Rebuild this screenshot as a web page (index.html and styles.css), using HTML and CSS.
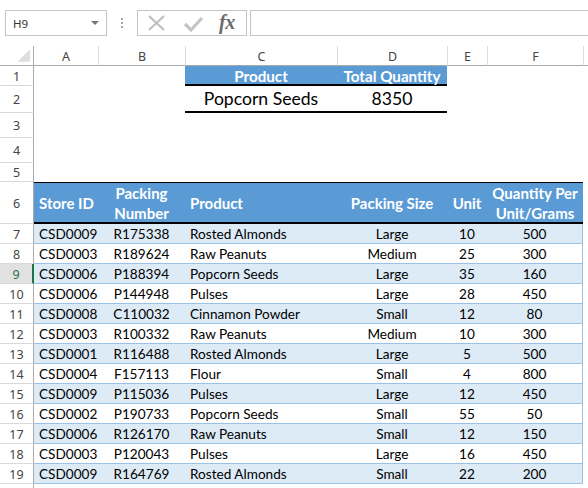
FILE: index.html
```html
<!DOCTYPE html>
<html>
<head>
<meta charset="utf-8">
<link rel="stylesheet" href="styles.css">
</head>
<body>
<div class="fbar">
  <div class="namebox"><span class="nb-text">H9</span><span class="nb-arrow"></span></div>
  <div class="grip"><i></i><i></i><i></i></div>
  <div class="btns">
    <svg class="ico-x" width="20" height="16" viewBox="0 0 20 16"><path d="M2 1 L17 15 M17 1 L2 15" stroke="#bdbdbd" stroke-width="2" fill="none"/></svg>
    <svg class="ico-ok" width="22" height="18" viewBox="0 0 22 18"><path d="M2 9 L8 15 L19 3" stroke="#c4c4c4" stroke-width="3.2" fill="none"/></svg>
    <span class="fx">fx</span>
  </div>
  <div class="finput"></div>
</div>

<div class="sheet">
  <div class="row ch">
    <div class="rh corner"><svg width="34" height="20" viewBox="0 0 34 20"><polygon points="31,3 31,16 18,16" fill="#dedede"/></svg></div>
    <div class="c a colh">A</div>
    <div class="c b colh dv">B</div>
    <div class="c cc colh dv">C</div>
    <div class="c d colh dv">D</div>
    <div class="c e colh dv">E</div>
    <div class="c f colh dv">F</div>
    <div class="c fill colh dv"></div>
  </div>

  <div class="row r1">
    <div class="rh">1</div>
    <div class="c a"></div><div class="c b"></div>
    <div class="c cc t1h">Product</div>
    <div class="c d t1h">Total Quantity</div>
    <div class="c e"></div><div class="c f"></div><div class="c fill"></div>
  </div>
  <div class="row r2">
    <div class="rh">2</div>
    <div class="c a"></div><div class="c b"></div>
    <div class="c cc t1v">Popcorn Seeds</div>
    <div class="c d t1v">8350</div>
    <div class="c e"></div><div class="c f"></div><div class="c fill"></div>
  </div>
  <div class="row r3"><div class="rh">3</div></div>
  <div class="row r4"><div class="rh">4</div></div>
  <div class="row r5"><div class="rh">5</div></div>

  <div class="row r6">
    <div class="rh">6</div>
    <div class="c a th left">Store ID</div>
    <div class="c b th mid">Packing<br>Number</div>
    <div class="c cc th left">Product</div>
    <div class="c d th mid">Packing Size</div>
    <div class="c e th mid">Unit</div>
    <div class="c f th mid">Quantity Per<br>Unit/Grams</div>
    <div class="c fill"></div>
  </div>

  <div class="row dr band"><div class="rh">7</div><div class="c a td left">CSD0009</div><div class="c b td mid">R175338</div><div class="c cc td left">Rosted Almonds</div><div class="c d td mid">Large</div><div class="c e td mid">10</div><div class="c f td mid">500</div><div class="c fill"></div></div>
  <div class="row dr"><div class="rh">8</div><div class="c a td left">CSD0003</div><div class="c b td mid">R189624</div><div class="c cc td left">Raw Peanuts</div><div class="c d td mid">Medium</div><div class="c e td mid">25</div><div class="c f td mid">300</div><div class="c fill"></div></div>
  <div class="row dr band"><div class="rh sel">9</div><div class="c a td left">CSD0006</div><div class="c b td mid">P188394</div><div class="c cc td left">Popcorn Seeds</div><div class="c d td mid">Large</div><div class="c e td mid">35</div><div class="c f td mid">160</div><div class="c fill"></div></div>
  <div class="row dr"><div class="rh">10</div><div class="c a td left">CSD0006</div><div class="c b td mid">P144948</div><div class="c cc td left">Pulses</div><div class="c d td mid">Large</div><div class="c e td mid">28</div><div class="c f td mid">450</div><div class="c fill"></div></div>
  <div class="row dr band"><div class="rh">11</div><div class="c a td left">CSD0008</div><div class="c b td mid">C110032</div><div class="c cc td left">Cinnamon Powder</div><div class="c d td mid">Small</div><div class="c e td mid">12</div><div class="c f td mid">80</div><div class="c fill"></div></div>
  <div class="row dr"><div class="rh">12</div><div class="c a td left">CSD0003</div><div class="c b td mid">R100332</div><div class="c cc td left">Raw Peanuts</div><div class="c d td mid">Medium</div><div class="c e td mid">10</div><div class="c f td mid">300</div><div class="c fill"></div></div>
  <div class="row dr band"><div class="rh">13</div><div class="c a td left">CSD0001</div><div class="c b td mid">R116488</div><div class="c cc td left">Rosted Almonds</div><div class="c d td mid">Large</div><div class="c e td mid">5</div><div class="c f td mid">500</div><div class="c fill"></div></div>
  <div class="row dr"><div class="rh">14</div><div class="c a td left">CSD0004</div><div class="c b td mid">F157113</div><div class="c cc td left">Flour</div><div class="c d td mid">Small</div><div class="c e td mid">4</div><div class="c f td mid">800</div><div class="c fill"></div></div>
  <div class="row dr band"><div class="rh">15</div><div class="c a td left">CSD0009</div><div class="c b td mid">P115036</div><div class="c cc td left">Pulses</div><div class="c d td mid">Large</div><div class="c e td mid">12</div><div class="c f td mid">450</div><div class="c fill"></div></div>
  <div class="row dr"><div class="rh">16</div><div class="c a td left">CSD0002</div><div class="c b td mid">P190733</div><div class="c cc td left">Popcorn Seeds</div><div class="c d td mid">Small</div><div class="c e td mid">55</div><div class="c f td mid">50</div><div class="c fill"></div></div>
  <div class="row dr band"><div class="rh">17</div><div class="c a td left">CSD0006</div><div class="c b td mid">R126170</div><div class="c cc td left">Raw Peanuts</div><div class="c d td mid">Small</div><div class="c e td mid">12</div><div class="c f td mid">150</div><div class="c fill"></div></div>
  <div class="row dr"><div class="rh">18</div><div class="c a td left">CSD0003</div><div class="c b td mid">P120043</div><div class="c cc td left">Pulses</div><div class="c d td mid">Large</div><div class="c e td mid">16</div><div class="c f td mid">450</div><div class="c fill"></div></div>
  <div class="row dr band"><div class="rh">19</div><div class="c a td left">CSD0009</div><div class="c b td mid">R164769</div><div class="c cc td left">Rosted Almonds</div><div class="c d td mid">Small</div><div class="c e td mid">22</div><div class="c f td mid">200</div><div class="c fill"></div></div>
  <div class="row r20"><div class="rh"></div></div>
</div>
</body>
</html>
```

FILE: styles.css
```css
* { box-sizing: border-box; }
html, body { margin: 0; padding: 0; }
body {
  width: 588px;
  height: 488px;
  overflow: hidden;
  background: #ffffff;
  font-family: "Lato", "Open Sans", sans-serif;
  color: #000;
}

/* formula bar */
.fbar {
  display: flex;
  align-items: stretch;
  height: 26px;
  margin-top: 10px;
  margin-bottom: 10px;
  padding-left: 5px;
}
.namebox {
  width: 102px;
  border: 1px solid #c6c6c6;
  display: flex;
  align-items: center;
  justify-content: space-between;
  padding: 0 7px 0 7px;
}
.nb-text {
  font-family: "Noto Sans", "Open Sans", sans-serif;
  font-size: 11.5px;
  color: #333;
}
.nb-arrow {
  width: 0; height: 0;
  border-left: 4px solid transparent;
  border-right: 4px solid transparent;
  border-top: 4px solid #777;
}
.grip {
  width: 30px;
  display: flex;
  flex-direction: column;
  align-items: center;
  justify-content: center;
  gap: 2px;
}
.grip i {
  display: block;
  width: 2px; height: 2px;
  background: #a8a8a8;
}
.btns {
  width: 110px;
  border: 1px solid #c6c6c6;
  display: flex;
  align-items: center;
  padding-left: 9px;
}
.ico-x { margin-right: 16px; }
.ico-ok { margin-right: 14px; margin-top: 1px; }
.fx {
  font-family: "Liberation Serif", "DejaVu Serif", serif;
  font-style: italic;
  font-weight: bold;
  font-size: 20px;
  color: #6b6b6b;
  letter-spacing: -0.5px;
  line-height: 1;
  margin-top: -2px;
}
.finput {
  flex: 1;
  margin-left: 3px;
  border: 1px solid #c6c6c6;
  border-right: none;
}

/* sheet */
.sheet { display: flex; flex-direction: column; }
.row { display: flex; align-items: stretch; flex: none; }
.rh {
  width: 34px;
  flex: none;
  border-right: 1px solid #ababab;
  border-bottom: 1px solid #dadada;
  display: flex;
  align-items: center;
  justify-content: center;
  font-family: "Noto Sans", "Open Sans", sans-serif;
  font-size: 12.5px;
  color: #444;
  padding-top: 1px;
}
.rh.sel {
  background: #e1e1e1;
  color: #217346;
  border-right: 2px solid #217346;
}
.c { flex: none; display: flex; align-items: center; }
.a { width: 64px; }
.b { width: 87px; }
.cc { width: 152px; }
.d { width: 110px; }
.e { width: 40px; }
.f { width: 96px; }
.fill { flex: 1; }

.ch { height: 20px; }
.ch .rh { border-bottom: 1px solid #ababab; padding: 0; }
.colh {
  justify-content: center;
  font-family: "Noto Sans", "Open Sans", sans-serif;
  font-size: 12.5px;
  color: #444;
  border-bottom: 1px solid #ababab;
  padding-top: 1px;
}
.colh.dv { border-left: 1px solid #dcdcdc; }

.r1 { height: 20px; }
.r2 { height: 27px; }
.r3 { height: 25px; }
.r4 { height: 25px; }
.r5 { height: 19px; }
.r6 { height: 42px; }
.dr { height: 20px; }
.r20 { height: 20px; }

.t1h {
  background: #5b9bd5;
  color: #fff;
  font-weight: bold;
  font-size: 15.2px;
  justify-content: center;
  border-bottom: 2px solid #000;
  padding-top: 1px;
  white-space: nowrap;
}
.t1v {
  font-size: 17.6px;
  justify-content: center;
  border-bottom: 2px solid #000;
}

.th {
  background: #5b9bd5;
  color: #fff;
  font-weight: bold;
  font-size: 15px;
  line-height: 20px;
  border-top: 1px solid #000;
  border-bottom: 2px solid #000;
  text-align: center;
  white-space: nowrap;
}
.td {
  font-size: 13.6px;
  border-bottom: 1px solid #9bc2e6;
  padding-top: 1px;
}
.band .td { background: #ddebf7; }
.left { justify-content: flex-start; padding-left: 5px; text-align: left; }
.mid { justify-content: center; }
.dr .f { border-right: 1px solid #9bc2e6; }
```
